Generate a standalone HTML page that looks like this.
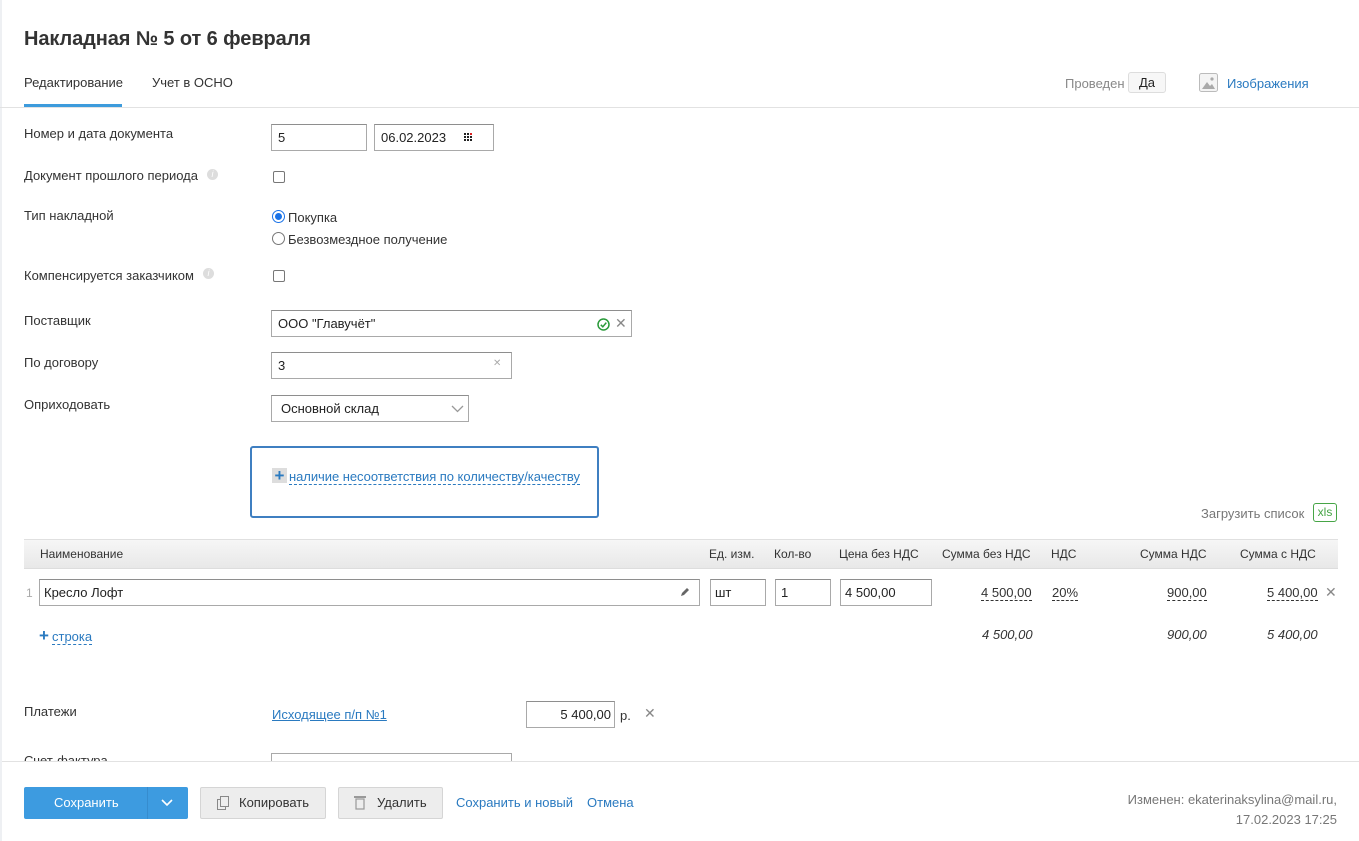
<!DOCTYPE html>
<html><head><meta charset="utf-8"><style>
*{box-sizing:border-box;margin:0;padding:0}
body{width:1359px;height:841px;position:relative;overflow:hidden;background:#fff;font-family:"Liberation Sans",Arial,sans-serif;font-size:13px;color:#333}
.a{position:absolute;white-space:nowrap}
.inp{position:absolute;border:1px solid #a9a9a9;border-top-color:#8e8e8e;background:#fff;height:27px;padding:0 0 0 6px;line-height:25px;font-size:13px;color:#222}
.lbl{position:absolute;left:24px;color:#333}
.lnk{color:#2a7ac0}
.cb{position:absolute;width:12px;height:12px;border:1px solid #777;border-radius:2px;background:#fff}
.dot{border-bottom:1px dashed #333}
.th{position:absolute;top:547px;font-size:12px;color:#333}
.btn{position:absolute;top:787px;height:32px;border:1px solid #d5d5d5;background:#ededed;border-radius:2px;line-height:30px;color:#333;font-size:13px}
.it{font-style:italic;position:absolute;top:627px;color:#333}
</style></head><body>
<div class="a" style="left:0;top:0;width:2px;height:841px;background:#eef0f3"></div>
<div class="a" style="left:24px;top:28px;font-size:20px;font-weight:bold;color:#333;letter-spacing:-0.1px">Накладная № 5 от 6 февраля</div>
<div class="a" style="left:24px;top:75px">Редактирование</div>
<div class="a" style="left:24px;top:104px;width:98px;height:3px;background:#3d9bdc"></div>
<div class="a" style="left:152px;top:75px">Учет в ОСНО</div>
<div class="a" style="left:0;top:107px;width:1359px;height:1px;background:#e2e2e2"></div>
<div class="a" style="left:1065px;top:76px;color:#888">Проведен</div>
<div class="a" style="left:1128px;top:72px;width:38px;height:21px;border:1px solid #ddd;border-radius:3px;background:#f7f7f7;text-align:center;line-height:19px;color:#222">Да</div>
<svg class="a" style="left:1199px;top:73px" width="19" height="19" viewBox="0 0 19 19"><rect x="0.5" y="0.5" width="18" height="18" rx="2" fill="#f4f4f4" stroke="#bbb"/><path d="M3 16 L8 9 L11 13 L13 11 L16 16Z" fill="#aaa"/><circle cx="13" cy="6" r="1.6" fill="#aaa"/></svg>
<div class="a lnk" style="left:1227px;top:76px">Изображения</div>

<div class="lbl a" style="top:126px">Номер и дата документа</div>
<div class="inp" style="left:271px;top:124px;width:96px">5</div>
<div class="inp" style="left:374px;top:124px;width:120px">06.02.2023</div>
<svg class="a" style="left:464px;top:133px" width="10" height="8"><g fill="#222"><rect x="0" y="0" width="2" height="2"/><rect x="3" y="0" width="2" height="2"/><rect x="6" y="0" width="2" height="2" fill="#d22"/><rect x="0" y="3" width="2" height="2"/><rect x="3" y="3" width="2" height="2"/><rect x="6" y="3" width="2" height="2"/><rect x="0" y="6" width="2" height="2"/><rect x="3" y="6" width="2" height="2"/><rect x="6" y="6" width="2" height="2"/></g></svg>

<div class="lbl a" style="top:168px">Документ прошлого периода</div>
<div class="a" style="left:207px;top:169px;width:11px;height:11px;border-radius:50%;background:#ddd;color:#fff;font-size:9px;text-align:center;line-height:11px;font-style:italic">i</div>
<div class="cb" style="left:273px;top:171px"></div>

<div class="lbl a" style="top:208px">Тип накладной</div>
<div class="a" style="left:272px;top:210px;width:13px;height:13px;border-radius:50%;border:1px solid #1a73e8;background:#fff"><div style="margin:2px;width:7px;height:7px;border-radius:50%;background:#1a73e8"></div></div>
<div class="a" style="left:288px;top:210px">Покупка</div>
<div class="a" style="left:272px;top:232px;width:13px;height:13px;border-radius:50%;border:1px solid #777"></div>
<div class="a" style="left:288px;top:232px">Безвозмездное получение</div>

<div class="lbl a" style="top:268px">Компенсируется заказчиком</div>
<div class="a" style="left:203px;top:268px;width:11px;height:11px;border-radius:50%;background:#ddd;color:#fff;font-size:9px;text-align:center;line-height:11px;font-style:italic">i</div>
<div class="cb" style="left:273px;top:270px"></div>

<div class="lbl a" style="top:313px">Поставщик</div>
<div class="inp" style="left:271px;top:310px;width:361px">ООО "Главучёт"</div>
<svg class="a" style="left:597px;top:318px" width="13" height="13"><circle cx="6.5" cy="6.5" r="5.5" fill="none" stroke="#2a9a3a" stroke-width="1.5"/><path d="M3.8 6.8 L5.8 8.8 L9.3 4.6" fill="none" stroke="#2a9a3a" stroke-width="1.5"/></svg>
<div class="a" style="left:615px;top:315px;color:#888;font-size:14px">✕</div>

<div class="lbl a" style="top:355px">По договору</div>
<div class="inp" style="left:271px;top:352px;width:241px">3</div>
<div class="a" style="left:493px;top:358px;color:#aaa;font-size:10px">✕</div>

<div class="lbl a" style="top:397px">Оприходовать</div>
<div class="inp" style="left:271px;top:395px;width:198px;padding-left:9px">Основной склад</div>
<svg class="a" style="left:451px;top:405px" width="13" height="8"><path d="M1 1 L6.5 6.5 L12 1" fill="none" stroke="#999" stroke-width="1.3"/></svg>

<div class="a" style="left:250px;top:446px;width:349px;height:72px;border:2px solid #3f7fc1;border-radius:3px"></div>
<div class="a" style="left:272px;top:468px;width:15px;height:15px;background:#ddd;color:#2a7ac0;font-size:17px;line-height:15px;text-align:center;font-weight:bold">+</div>
<div class="a lnk" style="left:289px;top:469px;border-bottom:1px dashed #2a7ac0;letter-spacing:-0.05px">наличие несоответствия по количеству/качеству</div>

<div class="a" style="left:1201px;top:506px;color:#777">Загрузить список</div>
<div class="a" style="left:1313px;top:503px;width:24px;height:19px;border:1px solid #46a546;border-radius:3px;color:#46a546;font-size:12px;text-align:center;line-height:17px">xls</div>

<div class="a" style="left:24px;top:539px;width:1314px;height:30px;background:linear-gradient(#f6f6f6,#e8e8e8);border-top:1px solid #e0e0e0;border-bottom:1px solid #ddd"></div>
<div class="th" style="left:40px">Наименование</div>
<div class="th" style="left:709px">Ед. изм.</div>
<div class="th" style="left:774px">Кол-во</div>
<div class="th" style="left:839px">Цена без НДС</div>
<div class="th" style="left:942px">Сумма без НДС</div>
<div class="th" style="left:1051px">НДС</div>
<div class="th" style="left:1140px">Сумма НДС</div>
<div class="th" style="left:1240px">Сумма с НДС</div>

<div class="a" style="left:26px;top:586px;color:#aaa;font-size:12px">1</div>
<div class="inp" style="left:39px;top:579px;width:661px;padding-left:4px">Кресло Лофт</div>
<svg class="a" style="left:680px;top:587px" width="10" height="10"><path d="M1 9 L2 6 L7 1 L9 3 L4 8Z" fill="#666"/></svg>
<div class="inp" style="left:710px;top:579px;width:56px;padding-left:4px">шт</div>
<div class="inp" style="left:775px;top:579px;width:56px;padding-left:5px">1</div>
<div class="inp" style="left:840px;top:579px;width:92px;padding-left:4px">4 500,00</div>
<div class="a dot" style="left:981px;top:585px">4 500,00</div>
<div class="a dot" style="left:1052px;top:585px">20%</div>
<div class="a dot" style="left:1167px;top:585px">900,00</div>
<div class="a dot" style="left:1267px;top:585px">5 400,00</div>
<div class="a" style="left:1325px;top:584px;color:#888;font-size:14px">✕</div>

<div class="a" style="left:39px;top:626px;color:#2a7ac0;font-size:17px;font-weight:bold">+</div>
<div class="a lnk" style="left:52px;top:629px;border-bottom:1px dashed #2a7ac0">строка</div>
<div class="it" style="left:982px">4 500,00</div>
<div class="it" style="left:1167px">900,00</div>
<div class="it" style="left:1267px">5 400,00</div>

<div class="lbl a" style="top:704px">Платежи</div>
<div class="a lnk" style="left:272px;top:707px;text-decoration:underline">Исходящее п/п №1</div>
<div class="inp" style="left:526px;top:701px;width:89px;text-align:right;padding-right:3px">5 400,00</div>
<div class="a" style="left:620px;top:708px">р.</div>
<div class="a" style="left:644px;top:705px;color:#888;font-size:14px">✕</div>
<div class="lbl a" style="top:753px">Счет-фактура</div>
<div class="a" style="left:271px;top:753px;width:241px;height:20px;border:1px solid #a9a9a9"></div>

<div class="a" style="left:2px;top:761px;width:1357px;height:80px;background:#fff;border-top:1px solid #e2e2e2"></div>
<div class="a" style="left:24px;top:787px;width:164px;height:32px;background:#3d9be0;border-radius:2px;color:#fff;line-height:32px"><span style="margin-left:30px">Сохранить</span><span style="position:absolute;left:147px;top:0;width:1px;height:32px;background:#368cce;display:none"></span><span style="position:absolute;left:123px;top:0;width:1px;height:32px;background:#368cce"></span><svg style="position:absolute;left:137px;top:12px" width="12" height="8"><path d="M1 1 L6 6 L11 1" fill="none" stroke="#fff" stroke-width="1.6"/></svg></div>
<div class="btn" style="left:200px;width:126px"><svg style="position:absolute;left:15px;top:8px" width="14" height="15"><rect x="1.5" y="3.5" width="8" height="10" fill="none" stroke="#888"/><rect x="4.5" y="0.5" width="8" height="10" fill="#ededed" stroke="#888"/></svg><span style="margin-left:38px">Копировать</span></div>
<div class="btn" style="left:338px;width:105px"><svg style="position:absolute;left:15px;top:7px" width="12" height="15"><rect x="0" y="1" width="12" height="2" fill="#999"/><rect x="2" y="4" width="8" height="10" fill="none" stroke="#999" stroke-width="1.2"/></svg><span style="margin-left:38px">Удалить</span></div>
<div class="a lnk" style="left:456px;top:795px">Сохранить и новый</div>
<div class="a lnk" style="left:587px;top:795px">Отмена</div>
<div class="a" style="right:22px;top:790px;color:#777;text-align:right;line-height:20px">Изменен: ekaterinaksylina@mail.ru,<br>17.02.2023 17:25</div>
</body></html>
